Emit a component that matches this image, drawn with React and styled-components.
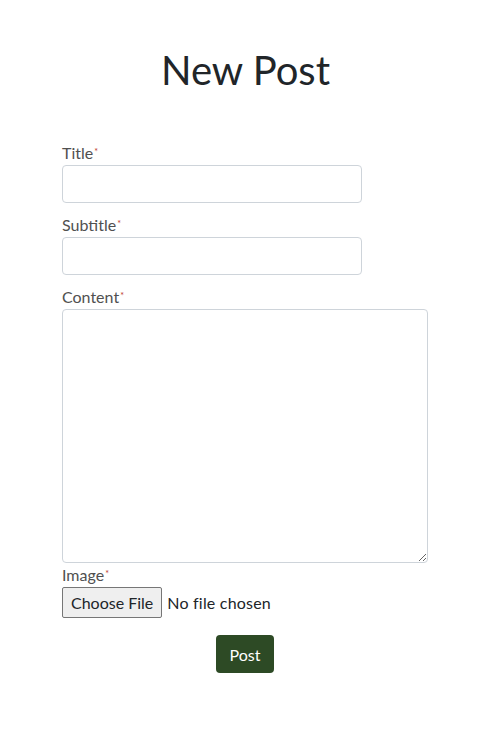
import React from 'react'
import styled, { createGlobalStyle } from 'styled-components'

const GlobalStyle = createGlobalStyle`
  body {
    margin: 0;
    background: #fff;
    font-family: Lato, "Open Sans", sans-serif;
    color: #212529;
  }
`

const Page = styled.main`
  width: 501px;
  padding: 46px 0 0;
  box-sizing: border-box;
`

const Heading = styled.h1`
  margin: 0 0 47px;
  text-align: center;
  font-weight: 400;
  font-size: 40px;
  line-height: 48px;
  padding-right: 10px;
  color: #212529;
`

const Form = styled.form`
  display: flex;
  flex-direction: column;
  padding: 0 0 0 62px;
`

const Field = styled.div`
  display: flex;
  flex-direction: column;
  align-items: flex-start;
  margin-bottom: ${p => p.$gap ?? 10}px;
`

const Label = styled.label`
  font-size: 16px;
  line-height: 24px;
  color: #505050;
  sup {
    color: #c0392b;
    font-size: 9px;
    vertical-align: top;
    position: relative;
    top: -1px;
    margin-left: 1px;
  }
`

const Input = styled.input`
  width: ${p => p.$width}px;
  height: 38px;
  box-sizing: border-box;
  border: 1px solid #ced4da;
  border-radius: 4px;
  padding: 6px 12px;
  font: inherit;
`

const TextArea = styled.textarea`
  width: 366px;
  height: 254px;
  box-sizing: border-box;
  border: 1px solid #ced4da;
  border-radius: 4px;
  padding: 6px 12px;
  font: inherit;
  resize: vertical;
`

const FileInput = styled.input`
  font-family: Lato, "Open Sans", sans-serif;
  font-size: 16px;
  letter-spacing: 0.2px;
  color: #212529;
  &::file-selector-button {
    font: inherit;
    color: #212529;
    background: #efefef;
    border: 1px solid #767676;
    border-radius: 2px;
    padding: 5px 8px;
    margin-right: 5px;
  }
`

const Actions = styled.div`
  display: flex;
  justify-content: center;
  width: 366px;
  margin-top: 17px;
`

const Button = styled.button`
  background: #2d4a25;
  color: #fff;
  border: none;
  border-radius: 4px;
  height: 38px;
  width: 58px;
  font-family: inherit;
  font-size: 16px;
  padding: 0;
`

function Req({ children, htmlFor }) {
  return (
    <Label htmlFor={htmlFor}>
      {children}
      <sup>*</sup>
    </Label>
  )
}

export default function App() {
  return (
    <>
      <GlobalStyle />
      <Page>
        <Heading>New Post</Heading>
        <Form onSubmit={e => e.preventDefault()}>
          <Field>
            <Req htmlFor="title">Title</Req>
            <Input id="title" $width={300} />
          </Field>
          <Field>
            <Req htmlFor="subtitle">Subtitle</Req>
            <Input id="subtitle" $width={300} />
          </Field>
          <Field $gap={0}>
            <Req htmlFor="content">Content</Req>
            <TextArea id="content" />
          </Field>
          <Field $gap={0}>
            <Req htmlFor="image">Image</Req>
            <FileInput id="image" type="file" />
          </Field>
          <Actions>
            <Button type="submit">Post</Button>
          </Actions>
        </Form>
      </Page>
    </>
  )
}
